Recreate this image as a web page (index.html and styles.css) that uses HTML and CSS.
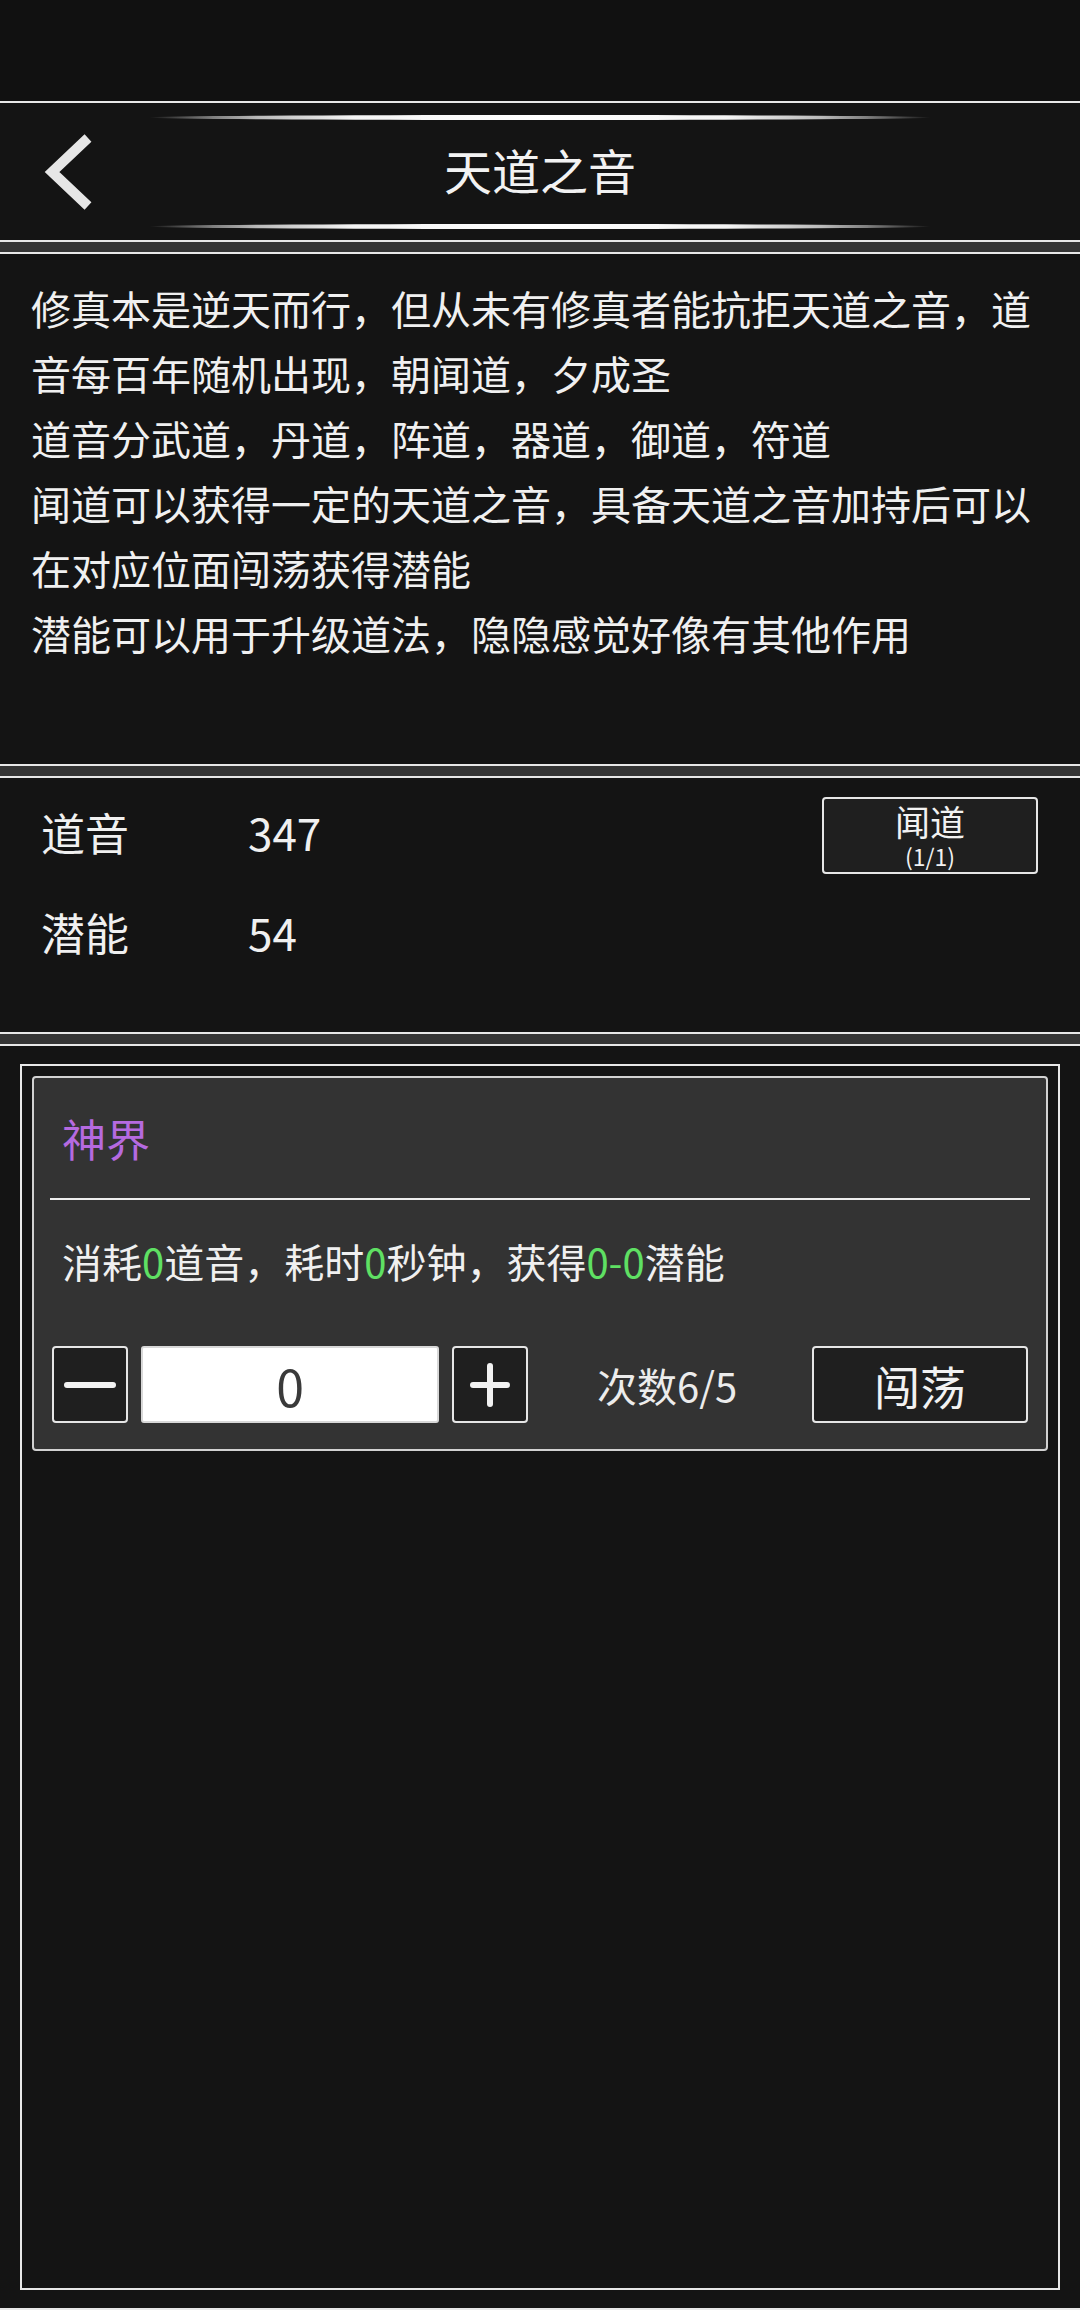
FILE: index.html
```html
<!DOCTYPE html>
<html lang="zh-CN">
<head>
<meta charset="utf-8">
<title>天道之音</title>
<link rel="stylesheet" href="styles.css">
</head>
<body>
<div class="status"></div>
<div class="stack">
  <header class="panel header">
    <div class="deco"></div>
    <div class="header-row">
      <svg class="back" width="52" height="76" viewBox="0 0 52 76" aria-hidden="true">
        <polyline points="44,4 8,38 44,72" fill="none" stroke="#e6e6e6" stroke-width="10" stroke-linejoin="miter" stroke-linecap="butt"/>
      </svg>
      <h1 class="title">天道之音</h1>
      <span></span>
    </div>
    <div class="deco"></div>
  </header>

  <section class="panel desc">
    <p>修真本是逆天而行，但从未有修真者能抗拒天道之音，道音每百年随机出现，朝闻道，夕成圣</p>
    <p>道音分武道，丹道，阵道，器道，御道，符道</p>
    <p>闻道可以获得一定的天道之音，具备天道之音加持后可以在对应位面闯荡获得潜能</p>
    <p>潜能可以用于升级道法，隐隐感觉好像有其他作用</p>
  </section>

  <section class="panel stats">
    <div class="stat-label">道音</div>
    <div class="stat-value">347</div>
    <button class="btn listen"><span class="btn-main">闻道</span><span class="btn-sub">(1/1)</span></button>
    <div class="stat-label">潜能</div>
    <div class="stat-value">54</div>
  </section>

  <section class="panel main">
    <div class="frame">
      <div class="card">
        <div class="card-title">神界</div>
        <div class="divider"></div>
        <div class="cost">消耗<span class="g">0</span>道音，耗时<span class="g">0</span>秒钟，获得<span class="g">0-0</span>潜能</div>
        <div class="controls">
          <button class="btn step" aria-label="减少">
            <svg width="52" height="6" viewBox="0 0 52 6"><line x1="3" y1="3" x2="49" y2="3" stroke="#f2f2f2" stroke-width="6" stroke-linecap="round"/></svg>
          </button>
          <div class="qty">0</div>
          <button class="btn step" aria-label="增加">
            <svg width="40" height="44" viewBox="0 0 40 44"><line x1="3" y1="22" x2="37" y2="22" stroke="#f2f2f2" stroke-width="6" stroke-linecap="round"/><line x1="20" y1="3" x2="20" y2="41" stroke="#f2f2f2" stroke-width="6" stroke-linecap="round"/></svg>
          </button>
          <div class="count">次数6/5</div>
          <button class="btn go">闯荡</button>
        </div>
      </div>
    </div>
  </section>
</div>
</body>
</html>
```

FILE: styles.css
```css
html, body {
  margin: 0;
  padding: 0;
}
body {
  width: 1080px;
  height: 2310px;
  overflow: hidden;
  background: #141414;
  color: #f0f0f0;
  font-family: "Noto Sans CJK SC", "Noto Sans", sans-serif;
}
.status {
  height: 101px;
  background: #111111;
}
.stack {
  display: flex;
  flex-direction: column;
  gap: 10px;
  background: #353535;
}
.panel {
  background: #141414;
  border-top: 2px solid #e8e8e8;
  border-bottom: 2px solid #e8e8e8;
}

/* header */
.header {
  box-sizing: border-box;
  height: 141px;
  padding: 12px 0 11px;
  display: flex;
  flex-direction: column;
  align-items: center;
  justify-content: space-between;
}
.deco {
  width: 782px;
  height: 5px;
  border-radius: 50%;
  background: linear-gradient(90deg,
    rgba(120,120,120,0) 0%,
    rgba(140,140,140,0.7) 6%,
    #bbbbbb 14%,
    #f4f4f4 26%,
    #ffffff 50%,
    #f4f4f4 74%,
    #bbbbbb 86%,
    rgba(140,140,140,0.7) 94%,
    rgba(120,120,120,0) 100%);
}
.header-row {
  width: 100%;
  flex: 1;
  display: grid;
  grid-template-columns: 1fr auto 1fr;
  align-items: center;
}
.back {
  display: block;
  margin-left: 44px;
}
.title {
  margin: 0 0 6px;
  font-size: 48px;
  font-weight: 400;
  line-height: 60px;
  color: #f2f2f2;
}

/* description */
.desc {
  box-sizing: border-box;
  height: 514px;
  padding: 22px 33px 0 31px;
  font-size: 40px;
  line-height: 65px;
  color: #f0f0f0;
}
.desc p {
  margin: 0;
}

/* stats */
.stats {
  height: 258px;
  box-sizing: border-box;
  padding: 4px 42px 0 41px;
  display: grid;
  grid-template-columns: 207px 1fr 216px;
  grid-auto-rows: 100px;
  align-items: center;
  font-size: 44px;
}
.stat-label,
.stat-value {
  line-height: 60px;
  color: #f0f0f0;
}
.stat-label {
  grid-column: 1;
}
.stat-value {
  grid-column: 2;
}
.btn {
  font-family: inherit;
  color: #f2f2f2;
  background: #1f1f1f;
  border: 2px solid #e6e6e6;
  border-radius: 4px;
  padding: 0;
  margin: 0;
  box-sizing: border-box;
}
.listen {
  grid-column: 3;
  grid-row: 1;
  align-self: start;
  margin-top: 15px;
  width: 216px;
  height: 77px;
  display: flex;
  flex-direction: column;
  align-items: center;
  padding-top: 3px;
}
.btn-main {
  font-size: 35px;
  line-height: 38px;
}
.btn-sub {
  margin-top: 1px;
  font-size: 23px;
  line-height: 30px;
}

/* main */
.main {
  height: 1266px;
  box-sizing: border-box;
  padding: 18px 20px;
}
.frame {
  height: 100%;
  box-sizing: border-box;
  border: 2px solid #e8e8e8;
  padding: 10px;
}
.card {
  background: #333333;
  border: 2px solid #d2d2d2;
  border-radius: 4px;
  padding: 0 16px 26px;
}
.card-title {
  height: 120px;
  box-sizing: border-box;
  padding: 0 12px 0;
  display: flex;
  align-items: center;
  font-size: 44px;
  color: #b56ae0;
}
.divider {
  height: 2px;
  background: #ededed;
}
.cost {
  margin-top: 36px;
  padding-left: 12px;
  font-size: 40px;
  line-height: 50px;
  color: #f0f0f0;
}
.g {
  color: #5fe063;
}
.controls {
  margin-top: 60px;
  padding: 0 2px;
  height: 77px;
  display: flex;
  align-items: center;
}
.step {
  width: 76px;
  height: 77px;
  display: flex;
  align-items: center;
  justify-content: center;
}
.step svg {
  display: block;
}
.qty {
  width: 298px;
  height: 77px;
  margin: 0 13px;
  box-sizing: border-box;
  background: #ffffff;
  border: 2px solid #d8d8d8;
  border-radius: 3px;
  display: flex;
  align-items: center;
  justify-content: center;
  font-size: 50px;
  color: #3a3a3a;
}
.count {
  margin-left: 69px;
  font-size: 40px;
  color: #ececec;
}
.go {
  margin-left: auto;
  width: 216px;
  height: 77px;
  font-size: 46px;
  line-height: 60px;
}
```
